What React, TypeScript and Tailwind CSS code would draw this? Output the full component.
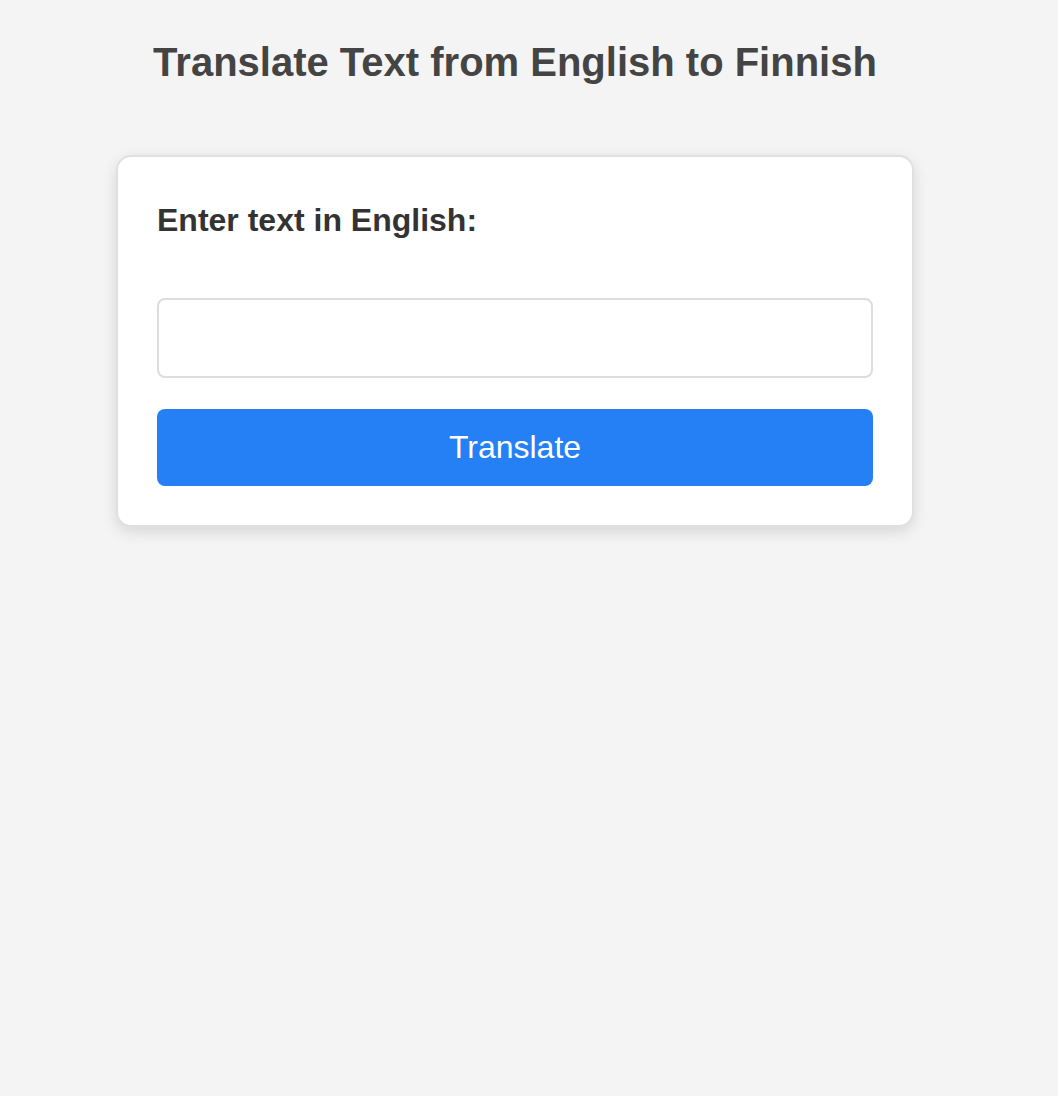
export default function App() {
  return (
    <div className="min-h-[1096px] bg-[#f4f4f4] font-['Liberation_Sans',Arial,sans-serif]">
      <div className="w-[1030px] flex flex-col items-center pt-[39px]">
        <h1 className="text-[40px] leading-[46px] font-bold text-[#444]">
          Translate Text from English to Finnish
        </h1>
        <div className="mt-[70px] w-[798px] bg-white border-2 border-[#e0e0e0] rounded-[15px] p-[39px] shadow-[0_5px_15px_rgba(0,0,0,0.12)]">
          <label htmlFor="src" className="block text-[32px] leading-[48px] font-bold text-[#333]">
            Enter text in English:
          </label>
          <input
            id="src"
            type="text"
            className="mt-[54px] block w-full h-[80px] border-2 border-[#ddd] rounded-[8px] px-4 text-[20px] outline-none"
          />
          <button
            type="button"
            className="mt-[31px] block w-full h-[77px] rounded-[8px] bg-[#2680f5] text-white text-[32px] leading-none pb-[2px]"
          >
            Translate
          </button>
        </div>
      </div>
    </div>
  );
}
